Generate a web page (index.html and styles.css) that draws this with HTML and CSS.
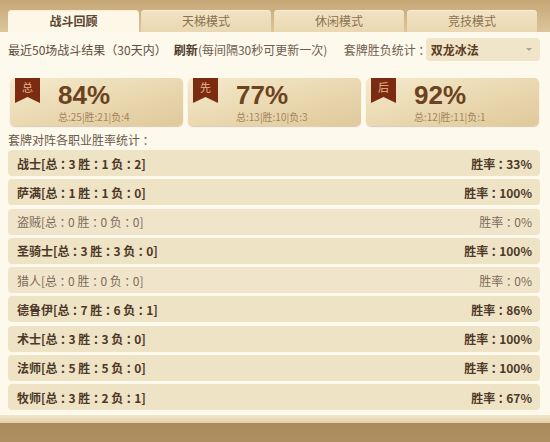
FILE: index.html
```html
<!DOCTYPE html>
<html lang="zh">
<head>
<meta charset="utf-8">
<link rel="stylesheet" href="styles.css">
</head>
<body>
<div class="page">
  <div class="tabbar">
    <div class="tab active">战斗回顾</div>
    <div class="tab">天梯模式</div>
    <div class="tab">休闲模式</div>
    <div class="tab">竞技模式</div>
  </div>
  <div class="content">
    <div class="info">
      <span class="recent">最近50场战斗结果（30天内）</span>
      <span class="refresh"><b>刷新</b>(每间隔30秒可更新一次)</span>
      <span class="deck-label">套牌胜负统计<i class="c">：</i></span>
      <div class="select"><span>双龙冰法</span><span class="arrow"></span></div>
    </div>
    <div class="cards">
      <div class="card">
        <div class="ribbon">总</div>
        <div class="card-body"><div class="pct">84%</div><div class="sub">总:25|胜:21|负:4</div></div>
      </div>
      <div class="card">
        <div class="ribbon">先</div>
        <div class="card-body"><div class="pct">77%</div><div class="sub">总:13|胜:10|负:3</div></div>
      </div>
      <div class="card">
        <div class="ribbon">后</div>
        <div class="card-body"><div class="pct">92%</div><div class="sub">总:12|胜:11|负:1</div></div>
      </div>
    </div>
    <div class="label">套牌对阵各职业胜率统计<i class="c">：</i></div>
    <div class="rows">
      <div class="row"><span>战士[总<i class="c">：</i>3 胜<i class="c">：</i>1 负<i class="c">：</i>2]</span><span>胜率<i class="c">：</i>33%</span></div>
      <div class="row"><span>萨满[总<i class="c">：</i>1 胜<i class="c">：</i>1 负<i class="c">：</i>0]</span><span>胜率<i class="c">：</i>100%</span></div>
      <div class="row zero"><span>盗贼[总<i class="c">：</i>0 胜<i class="c">：</i>0 负<i class="c">：</i>0]</span><span>胜率<i class="c">：</i>0%</span></div>
      <div class="row"><span>圣骑士[总<i class="c">：</i>3 胜<i class="c">：</i>3 负<i class="c">：</i>0]</span><span>胜率<i class="c">：</i>100%</span></div>
      <div class="row zero"><span>猎人[总<i class="c">：</i>0 胜<i class="c">：</i>0 负<i class="c">：</i>0]</span><span>胜率<i class="c">：</i>0%</span></div>
      <div class="row"><span>德鲁伊[总<i class="c">：</i>7 胜<i class="c">：</i>6 负<i class="c">：</i>1]</span><span>胜率<i class="c">：</i>86%</span></div>
      <div class="row"><span>术士[总<i class="c">：</i>3 胜<i class="c">：</i>3 负<i class="c">：</i>0]</span><span>胜率<i class="c">：</i>100%</span></div>
      <div class="row"><span>法师[总<i class="c">：</i>5 胜<i class="c">：</i>5 负<i class="c">：</i>0]</span><span>胜率<i class="c">：</i>100%</span></div>
      <div class="row"><span>牧师[总<i class="c">：</i>3 胜<i class="c">：</i>2 负<i class="c">：</i>1]</span><span>胜率<i class="c">：</i>67%</span></div>
    </div>
  </div>
  <div class="footer-strip"></div>
  <div class="footer"></div>
</div>
</body>
</html>
```
FILE: styles.css
```css
html, body {
  margin: 0;
  padding: 0;
}
body {
  width: 550px;
  height: 442px;
  overflow: hidden;
  background: #fdf9ec;
  font-family: "Noto Sans CJK SC", "DejaVu Sans", sans-serif;
  font-size: 12px;
  color: #5e4e3e;
}
.c {
  font-style: normal;
  font-feature-settings: "palt";
  margin: 0 2.5px;
}
.page {
  display: flex;
  flex-direction: column;
  height: 442px;
}
.tabbar {
  height: 22px;
  padding: 10px 0 0 8px;
  display: flex;
  gap: 2px;
  background: linear-gradient(#c6a676, #dcc59b);
}
.tab {
  width: 130px;
  height: 22px;
  line-height: 22px;
  text-align: center;
  border-radius: 4px 4px 0 0;
  background: linear-gradient(#f1e3c3, #ead8b2);
  color: #8c7150;
  font-size: 12px;
  box-shadow: inset 0 1px 0 #f7ecd4;
}
.tab.active {
  width: 131px;
  background: #fcf7e7;
  color: #5a4532;
  font-weight: bold;
}
.tab:nth-child(3) { margin-left: 1px; }
.tab:nth-child(4) { margin-left: 1px; }
.content {
  flex: 1;
  display: flex;
  flex-direction: column;
  padding: 0 10px 0 8px;
}
.info {
  display: flex;
  align-items: center;
  height: 29px;
  margin-top: 3px;
  white-space: nowrap;
}
.recent { width: 167px; }
.refresh { width: 171px; color: #6e5e4c; }
.refresh b { color: #4e3a28; font-weight: bold; }
.deck-label { width: 82px; color: #6e5e4c; }
.select {
  width: 102px;
  height: 23px;
  border-radius: 4px;
  background: #f1e5c9;
  display: flex;
  align-items: center;
  justify-content: space-between;
  padding: 0 8px 0 5px;
}
.select span:first-child {
  font-weight: bold;
  color: #5a3c20;
}
.arrow {
  width: 0;
  height: 0;
  border-left: 3px solid transparent;
  border-right: 3px solid transparent;
  border-top: 3px solid #b0a290;
}
.cards {
  display: flex;
  gap: 5px;
  margin: 14px 0 0 2px;
}
.card {
  width: 173px;
  height: 48px;
  border-radius: 5px;
  background: linear-gradient(165deg, #f5eacd 0%, #e9d7af 55%, #e0c99b 100%);
  box-shadow: 0 1px 1px rgba(150, 120, 70, 0.35);
  display: flex;
  padding-left: 5px;
  box-sizing: border-box;
}
.ribbon {
  width: 25px;
  height: 25px;
  background: #7b2b12;
  color: #e8b88a;
  font-size: 11px;
  text-align: center;
  line-height: 18px;
  clip-path: polygon(0 0, 100% 0, 100% 100%, 50% 76%, 0 100%);
}
.card-body {
  margin-left: 18px;
  display: flex;
  flex-direction: column;
}
.pct {
  font-family: "Liberation Sans", Arial, sans-serif;
  font-weight: bold;
  font-size: 26px;
  line-height: 30px;
  margin-top: 2px;
  color: #6b4320;
}
.sub {
  font-size: 10px;
  line-height: 14px;
  color: #a4845c;
}
.label {
  margin-top: 6px;
  height: 16px;
  line-height: 16px;
  color: #6a5a48;
}
.rows {
  margin-top: 2px;
  display: flex;
  flex-direction: column;
  gap: 3.25px;
}
.row {
  height: 26px;
  border-radius: 4px;
  background: #efe3c5;
  display: flex;
  align-items: center;
  justify-content: space-between;
  padding: 0 8px 0 9px;
  font-weight: bold;
  color: #4c3828;
}
.row.zero {
  font-weight: normal;
  color: #7c6a58;
  background: #f0e5ca;
}
.footer-strip {
  height: 8px;
  margin-top: 2px;
  background: linear-gradient(#f2e6cb, #e4d0a8);
}
.footer {
  height: 19px;
  background: linear-gradient(#a98a5b, #ad8f62);
}
```
